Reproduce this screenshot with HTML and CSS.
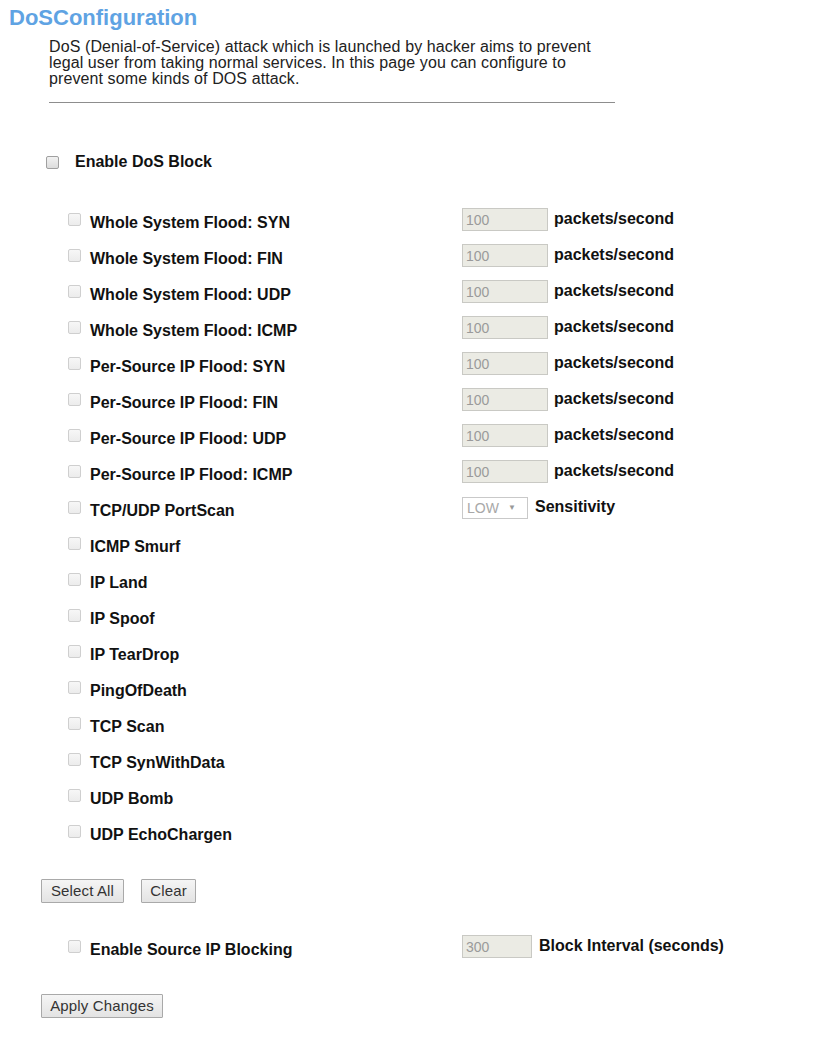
FILE: index.html
```html
<!DOCTYPE html>
<html>
<head>
<meta charset="utf-8">
<title>DoS Configuration</title>
<link rel="stylesheet" href="styles.css">
</head>
<body>
<div class="page">
  <h1 class="title">DoSConfiguration</h1>
  <div class="desc">
    <p>DoS (Denial-of-Service) attack which is launched by hacker aims to prevent legal user from taking normal services. In this page you can configure to prevent some kinds of DOS attack.</p>
    <hr class="rule">
  </div>

  <div class="master">
    <input type="checkbox" class="cb cb-on">
    <span class="lbl">Enable DoS Block</span>
  </div>

  <div class="list">
    <div class="row"><input type="checkbox" class="cb" disabled><span class="lbl name">Whole System Flood: SYN</span><input class="num" value="100" disabled><span class="lbl unit">packets/second</span></div>
    <div class="row"><input type="checkbox" class="cb" disabled><span class="lbl name">Whole System Flood: FIN</span><input class="num" value="100" disabled><span class="lbl unit">packets/second</span></div>
    <div class="row"><input type="checkbox" class="cb" disabled><span class="lbl name">Whole System Flood: UDP</span><input class="num" value="100" disabled><span class="lbl unit">packets/second</span></div>
    <div class="row"><input type="checkbox" class="cb" disabled><span class="lbl name">Whole System Flood: ICMP</span><input class="num" value="100" disabled><span class="lbl unit">packets/second</span></div>
    <div class="row"><input type="checkbox" class="cb" disabled><span class="lbl name">Per-Source IP Flood: SYN</span><input class="num" value="100" disabled><span class="lbl unit">packets/second</span></div>
    <div class="row"><input type="checkbox" class="cb" disabled><span class="lbl name">Per-Source IP Flood: FIN</span><input class="num" value="100" disabled><span class="lbl unit">packets/second</span></div>
    <div class="row"><input type="checkbox" class="cb" disabled><span class="lbl name">Per-Source IP Flood: UDP</span><input class="num" value="100" disabled><span class="lbl unit">packets/second</span></div>
    <div class="row"><input type="checkbox" class="cb" disabled><span class="lbl name">Per-Source IP Flood: ICMP</span><input class="num" value="100" disabled><span class="lbl unit">packets/second</span></div>
    <div class="row"><input type="checkbox" class="cb" disabled><span class="lbl name">TCP/UDP PortScan</span><span class="sel">LOW<span class="arrow">&#9660;</span></span><span class="lbl unit2">Sensitivity</span></div>
    <div class="row"><input type="checkbox" class="cb" disabled><span class="lbl name">ICMP Smurf</span></div>
    <div class="row"><input type="checkbox" class="cb" disabled><span class="lbl name">IP Land</span></div>
    <div class="row"><input type="checkbox" class="cb" disabled><span class="lbl name">IP Spoof</span></div>
    <div class="row"><input type="checkbox" class="cb" disabled><span class="lbl name">IP TearDrop</span></div>
    <div class="row"><input type="checkbox" class="cb" disabled><span class="lbl name">PingOfDeath</span></div>
    <div class="row"><input type="checkbox" class="cb" disabled><span class="lbl name">TCP Scan</span></div>
    <div class="row"><input type="checkbox" class="cb" disabled><span class="lbl name">TCP SynWithData</span></div>
    <div class="row"><input type="checkbox" class="cb" disabled><span class="lbl name">UDP Bomb</span></div>
    <div class="row"><input type="checkbox" class="cb" disabled><span class="lbl name">UDP EchoChargen</span></div>
  </div>

  <div class="btns">
    <button class="btn btn-sel">Select All</button>
    <button class="btn btn-clr">Clear</button>
  </div>

  <div class="row srcrow"><input type="checkbox" class="cb" disabled><span class="lbl name">Enable Source IP Blocking</span><input class="num num-short" value="300" disabled><span class="lbl unit2">Block Interval (seconds)</span></div>

  <div class="apply">
    <button class="btn btn-apply">Apply Changes</button>
  </div>
</div>
</body>
</html>
```

FILE: styles.css
```css
html, body {
  margin: 0;
  padding: 0;
  background: #ffffff;
}
body {
  font-family: "Liberation Sans", Arial, sans-serif;
  color: #111;
}
.page {
  width: 830px;
  height: 1045px;
  overflow: hidden;
}
.title {
  margin: 0;
  padding: 6px 0 0 9px;
  font-size: 22px;
  line-height: 24px;
  font-weight: bold;
  color: #5fa3e3;
}
.desc {
  margin: 9px 0 0 49px;
  width: 566px;
}
.desc p {
  margin: 0;
  font-size: 16px;
  letter-spacing: 0.1px;
  line-height: 16px;
  color: #222;
  padding-right: 10px;
}
.rule {
  margin: 15px 0 0 0;
  border: 0;
  height: 1px;
  background: #8d8d8d;
}
.cb {
  -webkit-appearance: none;
  appearance: none;
  width: 13px;
  height: 13px;
  margin: 0;
  border: 1px solid #cfcfcf;
  border-radius: 2px;
  background: linear-gradient(#f7f7f7, #ececec);
  flex: none;
}
.cb-on {
  border-color: #a0a0a0;
  background: linear-gradient(#f2f2f2, #dcdcdc);
}
.lbl {
  font-weight: bold;
  font-size: 16px;
  color: #111;
  white-space: nowrap;
}
.master {
  display: flex;
  align-items: center;
  margin: 48px 0 0 46px;
  height: 22px;
}
.master .lbl {
  margin-left: 16px;
}
.list {
  margin-top: 35px;
  display: flex;
  flex-direction: column;
  gap: 13px;
}
.row {
  display: flex;
  align-items: center;
  height: 23px;
  padding-left: 68px;
}
.row .name {
  width: 372px;
  margin-left: 9px;
  padding-top: 6px;
}
.num {
  box-sizing: border-box;
  width: 86px;
  height: 23px;
  margin: 0;
  padding: 0 0 0 3px;
  border: 1px solid #c9c9c4;
  background: #ebebe4;
  color: #9a9a9a;
  font-family: "Liberation Sans", Arial, sans-serif;
  font-size: 14px;
}
.num-short {
  width: 70px;
}
.unit {
  margin-left: 6px;
  padding-bottom: 2px;
}
.unit2 {
  margin-left: 7px;
  padding-bottom: 2px;
}
.sel {
  box-sizing: border-box;
  display: flex;
  align-items: center;
  width: 66px;
  height: 22px;
  padding-left: 4px;
  border: 1px solid #c9c9c9;
  background: #fff;
  color: #a8a8a8;
  font-size: 14px;
}
.arrow {
  font-size: 8px;
  margin-left: 9px;
  color: #999;
}
.btns {
  display: flex;
  gap: 17px;
  margin: 36px 0 0 41px;
}
.btn {
  box-sizing: border-box;
  height: 24px;
  margin: 0;
  padding: 0 6px;
  border: 1px solid #a9a9a9;
  border-radius: 1px;
  background: linear-gradient(#f5f5f5, #e3e3e3);
  color: #333;
  font-family: "Liberation Sans", Arial, sans-serif;
  font-size: 15px;
  letter-spacing: 0.15px;
  line-height: 22px;
}
.btn-sel {
  width: 83px;
}
.btn-clr {
  width: 55px;
}
.btn-apply {
  width: 122px;
}
.srcrow {
  margin-top: 32px;
}
.apply {
  margin: 36px 0 0 41px;
}
```
